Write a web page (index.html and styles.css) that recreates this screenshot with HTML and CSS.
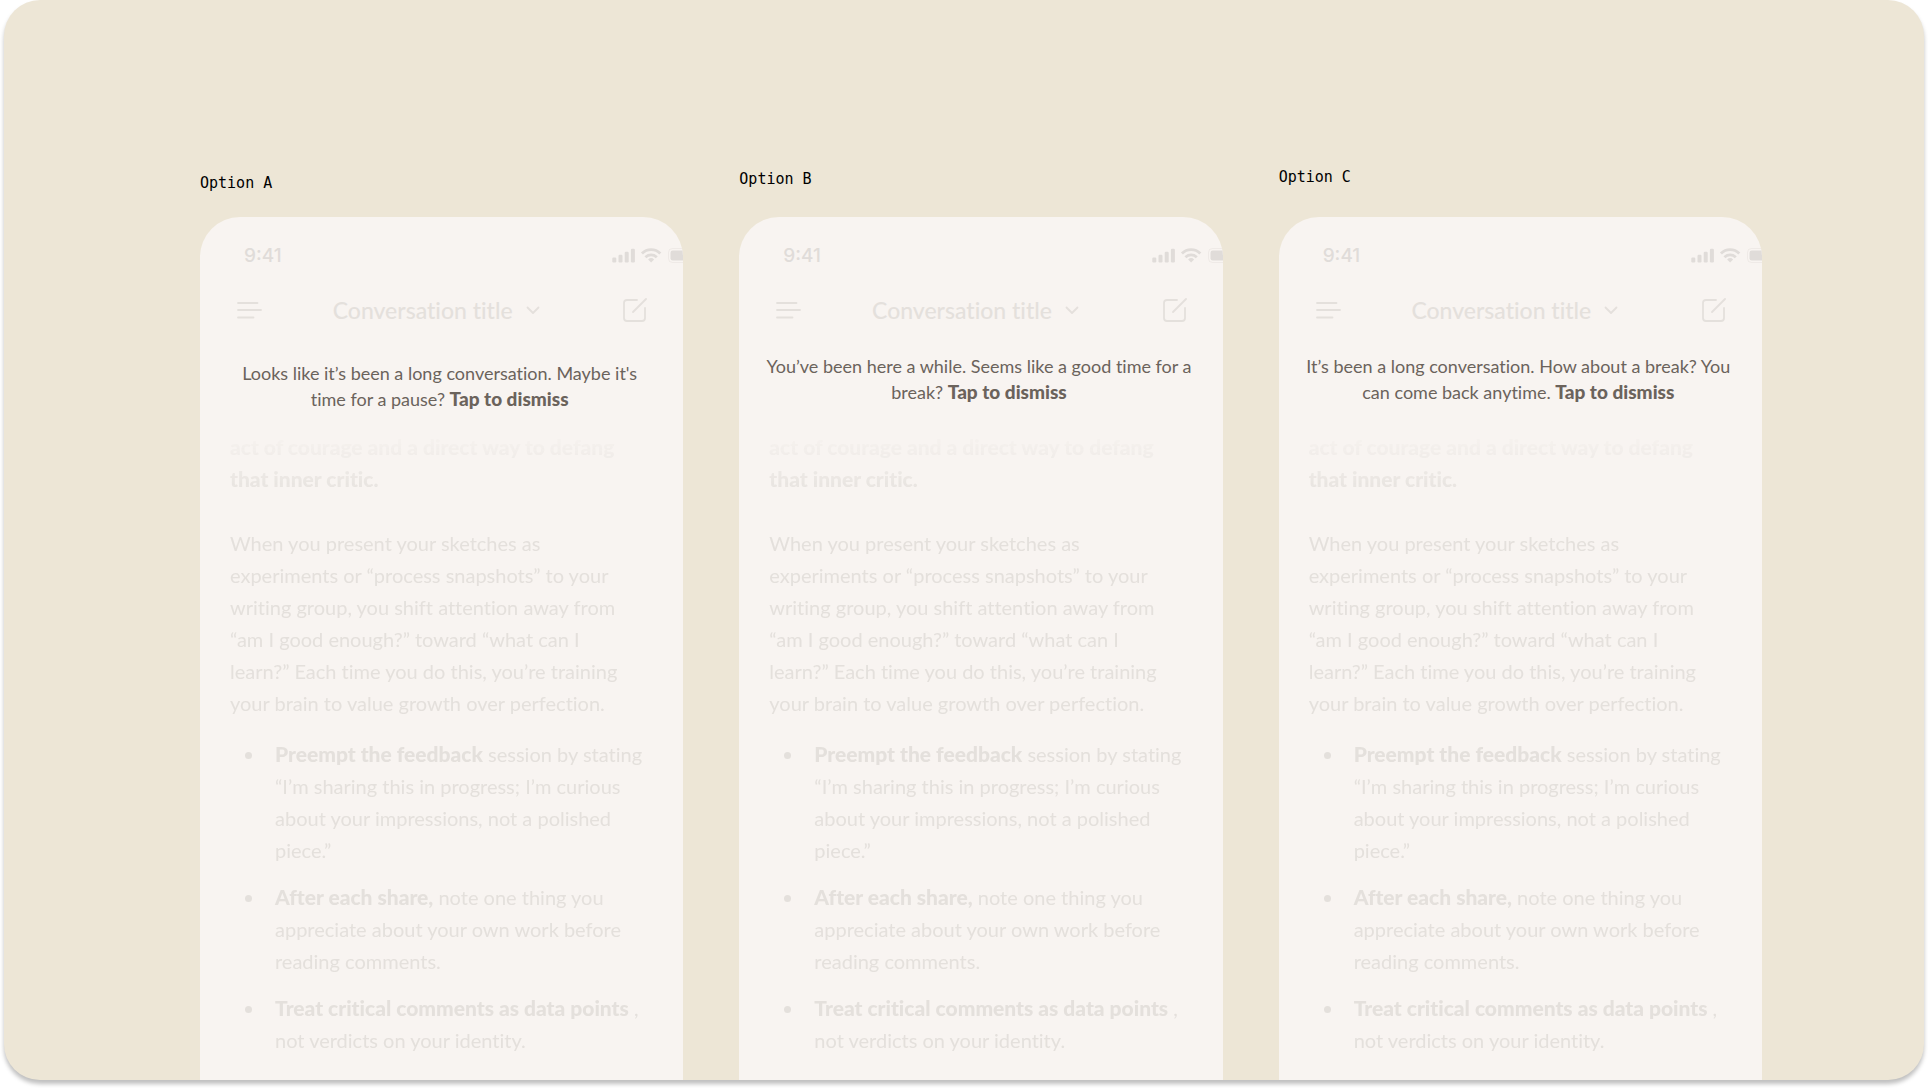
FILE: index.html
```html
<!DOCTYPE html>
<html lang="en">
<head>
  <meta charset="UTF-8">
  <title>Break reminder options</title>
  <meta name="viewport" content="width=device-width, initial-scale=1.0">
  <link rel="stylesheet" href="styles.css">
</head>
<body>

  <!-- shared icons -->
  <svg class="sprite" aria-hidden="true">
    <symbol id="icon-status" viewBox="0 0 83 16">
      <rect x="0.300" y="9.500" width="4" height="5" rx="1.200" fill="currentColor"/>
      <rect x="6.500" y="6.800" width="4" height="7.700" rx="1.200" fill="currentColor"/>
      <rect x="12.700" y="3.800" width="4" height="10.700" rx="1.200" fill="currentColor"/>
      <rect x="18.900" y="0.700" width="4" height="13.800" rx="1.200" fill="currentColor"/>
      <path d="M29.900 5.400a13 13 0 0 1 18.400 0" fill="none" stroke="currentColor" stroke-width="2.900"/>
      <path d="M33.400 9.300a8 8 0 0 1 11.400 0" fill="none" stroke="currentColor" stroke-width="2.700"/>
      <path d="M39.100 14.500l-3-3.100a4.400 4.400 0 0 1 6 0z" fill="currentColor"/>
      <rect x="56.500" y="0.500" width="26" height="14" rx="4" fill="none" stroke="currentColor" opacity="0.4"/>
      <rect x="58.500" y="2.500" width="22" height="10" rx="2.200" fill="currentColor"/>
    </symbol>
    <symbol id="icon-menu" viewBox="0 0 26 20">
      <path d="M2 3h19.500M2 10h23M2 17.500h15.500" fill="none" stroke="currentColor" stroke-width="1.800" stroke-linecap="round"/>
    </symbol>
    <symbol id="icon-chevron" viewBox="0 0 32 16">
      <path d="M10.500 5.500l5.500 5.500 5.500-5.500" fill="none" stroke="currentColor" stroke-width="1.800" stroke-linecap="round" stroke-linejoin="round"/>
    </symbol>
    <symbol id="icon-compose" viewBox="0 0 24 24">
      <path d="M14 2H4a3 3 0 0 0-3 3v15a3 3 0 0 0 3 3h15a3 3 0 0 0 3-3V10M10 14L23 1" fill="none" stroke="currentColor" stroke-width="1.800" stroke-linecap="round"/>
    </symbol>
  </svg>

  <main class="board">

    <section class="option option-a">
      <h2 class="option-label">Option A</h2>
      <div class="phone">
        <div class="status-bar">
          <span>9:41</span>
          <svg class="status-icons"><use href="#icon-status"/></svg>
        </div>
        <header class="top-bar">
          <button class="icon-btn" aria-label="Menu"><svg class="menu-icon"><use href="#icon-menu"/></svg></button>
          <button class="title-btn">Conversation title<svg class="chevron"><use href="#icon-chevron"/></svg></button>
          <button class="icon-btn" aria-label="New conversation"><svg class="compose-icon"><use href="#icon-compose"/></svg></button>
        </header>
        <p class="reminder">Looks like it’s been a long conversation. Maybe it's<br>time for a pause? <button class="dismiss">Tap to dismiss</button></p>
        <div class="message">
          <p><strong>act of courage and a direct way to defang<br>that inner critic.</strong></p>
          <p>When you present your sketches as<br>experiments or “process snapshots” to your<br>writing group, you shift attention away from<br>“am I good enough?” toward “what can I<br>learn?” Each time you do this, you’re training<br>your brain to value growth over perfection.</p>
          <ul>
            <li><strong>Preempt the feedback</strong> session by stating<br>“I’m sharing this in progress; I’m curious<br>about your impressions, not a polished<br>piece.”</li>
            <li><strong>After each share,</strong> note one thing you<br>appreciate about your own work before<br>reading comments.</li>
            <li><strong>Treat critical comments as data points</strong> ,<br>not verdicts on your identity.</li>
          </ul>
        </div>
      </div>
    </section>

    <section class="option option-b">
      <h2 class="option-label">Option B</h2>
      <div class="phone">
        <div class="status-bar">
          <span>9:41</span>
          <svg class="status-icons"><use href="#icon-status"/></svg>
        </div>
        <header class="top-bar">
          <button class="icon-btn" aria-label="Menu"><svg class="menu-icon"><use href="#icon-menu"/></svg></button>
          <button class="title-btn">Conversation title<svg class="chevron"><use href="#icon-chevron"/></svg></button>
          <button class="icon-btn" aria-label="New conversation"><svg class="compose-icon"><use href="#icon-compose"/></svg></button>
        </header>
        <p class="reminder">You’ve been here a while. Seems like a good time for a<br>break? <button class="dismiss">Tap to dismiss</button></p>
        <div class="message">
          <p><strong>act of courage and a direct way to defang<br>that inner critic.</strong></p>
          <p>When you present your sketches as<br>experiments or “process snapshots” to your<br>writing group, you shift attention away from<br>“am I good enough?” toward “what can I<br>learn?” Each time you do this, you’re training<br>your brain to value growth over perfection.</p>
          <ul>
            <li><strong>Preempt the feedback</strong> session by stating<br>“I’m sharing this in progress; I’m curious<br>about your impressions, not a polished<br>piece.”</li>
            <li><strong>After each share,</strong> note one thing you<br>appreciate about your own work before<br>reading comments.</li>
            <li><strong>Treat critical comments as data points</strong> ,<br>not verdicts on your identity.</li>
          </ul>
        </div>
      </div>
    </section>

    <section class="option option-c">
      <h2 class="option-label">Option C</h2>
      <div class="phone">
        <div class="status-bar">
          <span>9:41</span>
          <svg class="status-icons"><use href="#icon-status"/></svg>
        </div>
        <header class="top-bar">
          <button class="icon-btn" aria-label="Menu"><svg class="menu-icon"><use href="#icon-menu"/></svg></button>
          <button class="title-btn">Conversation title<svg class="chevron"><use href="#icon-chevron"/></svg></button>
          <button class="icon-btn" aria-label="New conversation"><svg class="compose-icon"><use href="#icon-compose"/></svg></button>
        </header>
        <p class="reminder">It’s been a long conversation. How about a break? You<br>can come back anytime. <button class="dismiss">Tap to dismiss</button></p>
        <div class="message">
          <p><strong>act of courage and a direct way to defang<br>that inner critic.</strong></p>
          <p>When you present your sketches as<br>experiments or “process snapshots” to your<br>writing group, you shift attention away from<br>“am I good enough?” toward “what can I<br>learn?” Each time you do this, you’re training<br>your brain to value growth over perfection.</p>
          <ul>
            <li><strong>Preempt the feedback</strong> session by stating<br>“I’m sharing this in progress; I’m curious<br>about your impressions, not a polished<br>piece.”</li>
            <li><strong>After each share,</strong> note one thing you<br>appreciate about your own work before<br>reading comments.</li>
            <li><strong>Treat critical comments as data points</strong> ,<br>not verdicts on your identity.</li>
          </ul>
        </div>
      </div>
    </section>

  </main>

</body>
</html>
```

FILE: styles.css
```css
* {
  box-sizing: border-box;
}

body {
  margin: 0;
  padding: 0 4px 8px;
  background: #fff;
  font-family: Lato, "Open Sans", sans-serif;
  font-variant-ligatures: none;
}

p, h2, ul {
  margin: 0;
  padding: 0;
}

button {
  padding: 0;
  border: none;
  background: none;
  color: inherit;
  font: inherit;
  font-variant-ligatures: none;
  cursor: pointer;
}

strong {
  font-size: 21px;
  font-weight: 900;
}

svg {
  display: block;
}

.sprite {
  display: none;
}

.board {
  display: grid;
  grid-template-columns: repeat(3, 1fr);
  gap: 56px;
  min-height: calc(100vh - 8px);
  padding: 0 162px 0 196px;
  border-radius: 36px;
  background: #ede6d6;
  box-shadow: 0 4px 4px rgba(0, 0, 0, 0.25);
}

.option {
  display: grid;
  grid-template-rows: 217px 1fr;
}

.option-label {
  align-self: end;
  padding-bottom: 24px;
  color: #000;
  font: 15px/20px "DejaVu Sans Mono", monospace;
}

.option-b .option-label {
  padding-bottom: 28px;
}

.option-c .option-label {
  padding-bottom: 30px;
}

.phone {
  overflow: hidden;
  border-radius: 40px 40px 0 0;
  background: #f8f4f1;
  color: #e4e0dc;
}

.status-bar {
  display: flex;
  justify-content: space-between;
  align-items: center;
  height: 48px;
  margin-top: 15px;
  padding-left: 44px;
  color: #e0dcd9;
  font: 500 19px/24px Inter, sans-serif;
}

/* the battery runs past the edge of the frame */
.status-icons {
  flex: none;
  width: 83px;
  height: 16px;
  margin-right: -12px;
}

.top-bar {
  display: flex;
  justify-content: space-between;
  align-items: center;
  height: 60px;
  padding: 0 36px;
}

.menu-icon {
  width: 26px;
  height: 20px;
}

.compose-icon {
  width: 24px;
  height: 24px;
}

.title-btn {
  display: flex;
  align-items: center;
  padding-right: 4px;
  font-size: 23px;
  font-weight: 500;
}

.chevron {
  width: 32px;
  height: 16px;
  margin-left: 4px;
}

.reminder {
  height: 91px;
  padding: 14px 4px 0 0;
  color: #6b635c;
  font-size: 18px;
  line-height: 25px;
  text-align: center;
}

.option-a .reminder {
  padding-top: 21px;
}

.dismiss {
  font-size: 19px;
  font-weight: 900;
}

.message {
  padding: 0 0 20px 30px;
  font-size: 20px;
  line-height: 32px;
  -webkit-mask-image: linear-gradient(transparent, #000 72px);
  mask-image: linear-gradient(transparent, #000 72px);
}

.message p + p {
  margin-top: 32px;
}

.message ul {
  margin-top: 19px;
  padding-left: 35px;
}

.message li {
  padding-left: 10px;
}

.message li + li {
  margin-top: 15px;
}
```
